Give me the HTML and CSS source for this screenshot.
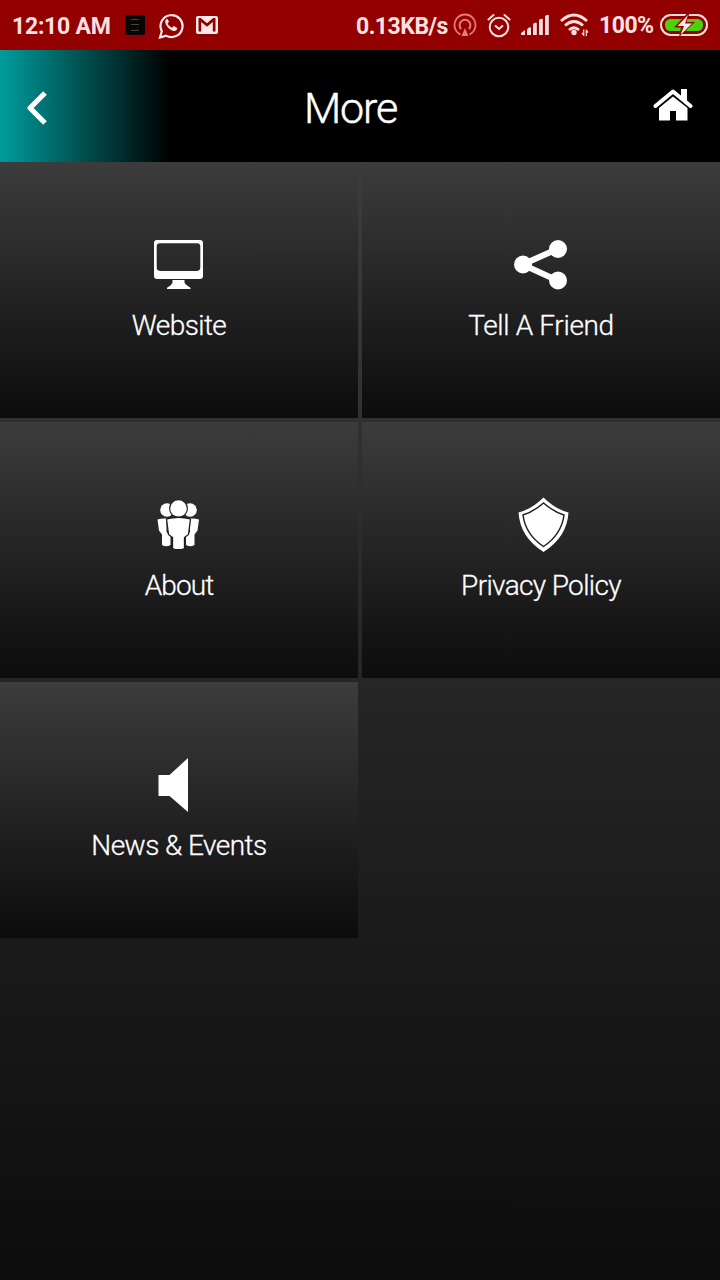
FILE: index.html
```
<!DOCTYPE html>
<html lang="en">
<head>
    <meta charset="UTF-8">
    <title>More</title>
    <link rel="stylesheet" href="styles.css">
</head>

<body>
    <div class="status-bar">
        <span class="time">12:10 AM</span>
        <svg class="icon-app" width="20" height="20" viewBox="0 0 20 20">
            <rect width="20" height="20" rx="2" fill="#080606"/>
            <path d="M6 4.500h8M6 9.500h8M6 15.500h8" stroke="#4a4140" stroke-width="1"/>
        </svg>
        <svg class="icon-chat" width="26" height="27" viewBox="0 0 26 27">
            <path d="M2 25.500l1.800-6.300A11 11 0 1 1 8 23.600z" fill="none" stroke="#ffe9e9" stroke-width="2.200"/>
            <path d="M9.300 6.800c-1.600.6-2.400 2-2 3.800.9 4 4.600 7.500 8.300 8.300 1.900.3 3.500-.8 3.700-2.900l-3.500-1.900-1.700 1.700c-2-.8-3.600-2.300-4.500-4.300l1.400-1.700z" fill="#ffe9e9"/>
        </svg>
        <svg class="icon-mail" width="22" height="18" viewBox="0 0 22 18">
            <rect width="22" height="18" rx="2" fill="#ffe9e9"/>
            <path d="M2.500 2h2.300L11 7.200 17.200 2h2.300v13.500h-2.700V6L11 10.800 5.200 6v9.500H2.500z" fill="#930000"/>
        </svg>
        <span class="speed">0.13KB/s</span>
        <svg class="icon-hotspot" width="24" height="24" viewBox="0 0 24 24">
            <path d="M7.500 21.500a10.500 10.500 0 1 1 9 0" fill="none" stroke="#e47c7c" stroke-width="1.800"/>
            <path d="M8.200 16a5.400 5.400 0 1 1 7.600 0" fill="none" stroke="#e47c7c" stroke-width="2"/>
            <path d="M12 15l3.500 8h-7z" fill="#e47c7c"/>
        </svg>
        <svg class="icon-alarm" width="24" height="25" viewBox="0 0 24 25">
            <circle cx="12" cy="14" r="9.300" fill="none" stroke="#ffdede" stroke-width="2"/>
            <path d="M1.500 6.500l5-4.500M22.500 6.500l-5-4.500" stroke="#ffdede" stroke-width="2" stroke-linecap="round"/>
            <path d="M8 12.500l4 3.500 4-3.500" fill="none" stroke="#ffdede" stroke-width="2"/>
        </svg>
        <svg class="icon-signal" width="28" height="20" viewBox="0 0 28 20">
            <path d="M0 20v-2l4-3v5zM6 14.500q2-3 4-2V20H6zM12 9q1.900-2 3.800-1v12H12zM18 5q1.900-2 3.800-1v16H18zM24 1q1.900-1.500 3.800-1v20H24z" fill="#ffdede"/>
        </svg>
        <svg class="icon-wifi" width="29" height="24" viewBox="0 0 29 24">
            <path d="M1 8Q14 -4 27 8M5 12.500Q14 4.500 23 12.500M9 17Q14 12.500 19 17" fill="none" stroke="#ffdede" stroke-width="2.800"/>
            <circle cx="14" cy="19.500" r="2.700" fill="#ffdede"/>
            <path d="M23.700 16.500V22l-1.700-2M26.300 23v-5.500l1.700 2" fill="none" stroke="#ffdede" stroke-width="1.200"/>
        </svg>
        <span class="percent">100%</span>
        <svg class="icon-battery" width="48" height="22" viewBox="0 0 48 22">
            <rect x="1" y="1" width="46" height="20" rx="10" fill="none" stroke="#ffdede" stroke-width="2"/>
            <rect x="5" y="5" width="38" height="12" rx="5.500" fill="#4fd10a"/>
            <path d="M27.500 -1L14 13.500h7L19 23l16-15h-8.500l3-9z" fill="#930000"/>
            <path d="M28 1L17.500 12h6.500l-3.500 9L32 9.500h-7z" fill="#ffe9e9"/>
        </svg>
    </div>

    <div class="header">
        <svg class="icon-back" width="22" height="36" viewBox="0 0 22 36">
            <path d="M19 3L4 18l15 15" fill="none" stroke="#fff" stroke-width="5.200" stroke-linejoin="round"/>
        </svg>
        <h1>More</h1>
        <svg class="icon-home" width="40" height="33" viewBox="0 0 40 33">
            <path d="M2.500 17L20 2.500 37.500 17" fill="none" stroke="#fff" stroke-width="4" stroke-linejoin="round" stroke-linecap="round"/>
            <path d="M28 0h6v13l-6-5z" fill="#fff"/>
            <path d="M6 19L20 7.500 34.500 19v12.500H23V22h-6v9.500H6z" fill="#fff"/>
        </svg>
    </div>

    <div class="menu">
        <div class="tile">
            <svg width="60" height="60" viewBox="0 0 60 60">
                <path fill-rule="evenodd" d="M8 5h43a3 3 0 0 1 3 3v33a3 3 0 0 1-3 3H8a3 3 0 0 1-3-3V8a3 3 0 0 1 3-3zM11 8.300a3.300 3.300 0 0 0-3.300 3.300v21a3.300 3.300 0 0 0 3.300 3.300h37a3.300 3.300 0 0 0 3.300-3.300v-21A3.300 3.300 0 0 0 48 8.300z" fill="#fff"/>
                <path d="M23.500 45h12v2.500q1 2.500 6 5.200V54H18v-1.300q4.500-2.200 5.500-5.200z" fill="#fff"/>
            </svg>
            <span class="website">Website</span>
        </div>
        <div class="tile">
            <svg width="60" height="60" viewBox="0 0 60 60">
                <path d="M46.500 14L11.500 29.500l35 16" fill="none" stroke="#fff" stroke-width="6"/>
                <circle cx="47" cy="14" r="9" fill="#fff"/>
                <circle cx="12" cy="29.500" r="9" fill="#fff"/>
                <circle cx="47" cy="45.500" r="9" fill="#fff"/>
            </svg>
            <span class="friend">Tell A Friend</span>
        </div>
        <div class="tile">
            <svg width="60" height="60" viewBox="0 0 60 60">
                <circle cx="18" cy="15" r="6.800" fill="#fff"/>
                <circle cx="41" cy="15" r="6.800" fill="#fff"/>
                <circle cx="29.500" cy="13.500" r="9.500" fill="#232323"/>
                <circle cx="29.500" cy="13.500" r="8.300" fill="#fff"/>
                <path d="M8.500 24.500q4-1.500 9-1v13.500l4 4V50q-4.500 2.500-8.500 0V39.500l-3-4zM50 24.500q-4-1.500-9-1v13.500l-4 4V50q4.500 2.500 8.500 0V39.500l3-4z" fill="#fff"/>
                <path d="M17.500 24q12-3.500 24 0l-2 15.500-4 3v11q-6 2.500-12 0v-11l-4-3z" fill="#fff" stroke="#1e1e1e" stroke-width="1.300"/>
            </svg>
            <span class="about">About</span>
        </div>
        <div class="tile">
            <svg width="60" height="60" viewBox="0 0 60 60">
                <path d="M32.500 2.500Q44 14 57.500 17.500 56 42 32.500 57 9 42 7.500 17.500 21 14 32.500 2.500z" fill="#fff"/>
                <path d="M32.500 8Q43 17 53 20 50.500 39.500 32.500 51.500 14.500 39.500 12 20 22 17 32.500 8z" fill="#fff" stroke="#222" stroke-width="1.500"/>
            </svg>
            <span class="privacy">Privacy Policy</span>
        </div>
        <div class="tile">
            <svg width="60" height="60" viewBox="0 0 60 60">
                <path d="M9.500 20H20.500L39 3v54L20.500 41H9.500z" fill="#fff"/>
            </svg>
            <span class="news">News &amp; Events</span>
        </div>
    </div>
</body>

</html>
```
FILE: styles.css
```
* {
    box-sizing: border-box;
}

body {
    margin: 0;
    width: 720px;
    height: 1280px;
    overflow: hidden;
    font-family: Roboto, sans-serif;
    background-color: #0c0c0c;
    color: white;
}

svg {
    display: block;
    flex: none;
}

/* Status bar */
.status-bar {
    display: flex;
    align-items: center;
    height: 50px;
    padding-left: 12px;
    background-color: #930000;
    color: #ffe1e1;
    font-size: 23px;
    font-weight: 700;
    white-space: nowrap;
}

.time {
    width: 113px;
    padding-top: 2px;
    letter-spacing: -0.25px;
}

.icon-chat {
    margin-left: 13px;
}

.icon-mail {
    margin-left: 12px;
}

.speed {
    width: 96px;
    margin-left: 138px;
    padding-top: 2px;
    letter-spacing: -0.5px;
}

.icon-hotspot {
    margin-left: 1px;
}

.icon-alarm {
    margin-left: 10px;
}

.icon-signal {
    margin-left: 10px;
}

.icon-wifi {
    margin-left: 11px;
}

.percent {
    width: 61px;
    margin-left: 10px;
    padding-top: 1px;
    letter-spacing: -0.5px;
}

/* Header */
.header {
    display: flex;
    align-items: center;
    justify-content: space-between;
    height: 112px;
    padding: 0 27px 0 26px;
    background: linear-gradient(to right, #009c9c, #000 170px);
}

.header h1 {
    margin: 4px 0 0;
    font-size: 43px;
    font-weight: 300;
    letter-spacing: -1.1px;
    -webkit-text-stroke: 0.5px white;
}

.icon-back {
    margin-top: 4px;
}

.icon-home {
    margin-bottom: 2px;
}

/* Menu */
.menu {
    display: grid;
    grid-template-columns: 358px 358px;
    grid-auto-rows: 256px;
    gap: 4px;
    height: 1118px;
    background: linear-gradient(#3c3c3c, #0c0c0c);
}

.tile {
    display: flex;
    flex-direction: column;
    align-items: center;
    padding-top: 73px;
    background: linear-gradient(#3c3c3c, #0c0c0c);
    font-size: 28px;
    font-weight: 300;
    line-height: 34px;
    -webkit-text-stroke: 0.3px white;
}

.tile span {
    margin-top: 14px;
}

.website {
    letter-spacing: -0.6px;
}

.friend {
    letter-spacing: -0.35px;
}

.about {
    letter-spacing: -0.9px;
}

.privacy {
    letter-spacing: -0.65px;
}

.news {
    letter-spacing: -0.55px;
}
```
